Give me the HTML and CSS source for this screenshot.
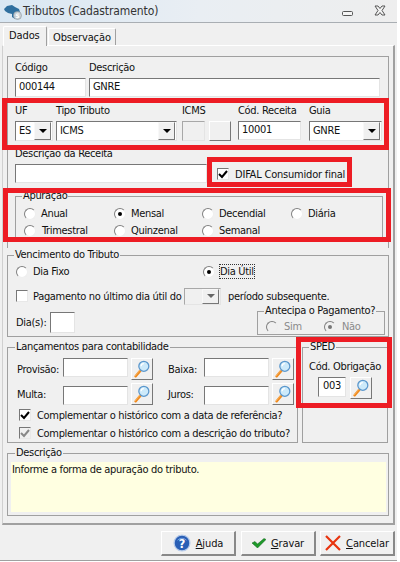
FILE: index.html
```html
<!DOCTYPE html>
<html>

<head>
    <title>Tributos (Cadastramento)</title>
    <link rel="stylesheet" href="styles.css">
</head>

<body>
    <svg class="defs" width="0" height="0">
        <symbol id="lupa" viewBox="0 0 22 22">
            <path d="M4 19 L9 13" stroke="#f08a1d" stroke-width="2.8" stroke-linecap="round" />
            <path d="M3.5 18.5 L8.5 12.5" stroke="#f9c27c" stroke-width="0.8" stroke-linecap="round" />
            <circle cx="13" cy="8" r="5.5" fill="#cdeafa" stroke="#5b97cc" stroke-width="1.4" />
            <path d="M10 8 A3 3 0 0 1 13 5" fill="none" stroke="#fff" stroke-width="1.4" />
        </symbol>
        <symbol id="visto" viewBox="0 0 12 12">
            <path d="M2 6 L5 9 L10 3" fill="none" stroke="currentColor" stroke-width="2" />
        </symbol>
    </svg>

    <div class="window">
        <div class="titlebar">
            <svg class="app-icon" width="20" height="20" viewBox="0 0 20 20">
                <path d="M1 8 L4 5 L9 4 L12 6 L16 8 L17 11 L14 14 L12 18 L9 16 L9 13 L5 12 L2 10 Z" fill="#2f6f9f" />
                <circle cx="14.5" cy="14.5" r="4" fill="#c9d0d6" stroke="#8a949c" stroke-width="0.6" />
                <text x="12.6" y="17" class="app-s">S</text>
            </svg>
            <span class="title">Tributos (Cadastramento)</span>
            <svg class="win-btn" width="46" height="12" viewBox="0 0 46 12">
                <rect x="0.5" y="6.5" width="10" height="4" rx="1" fill="#f4f4f4" stroke="#555" />
                <path d="M33 1 L36 1 L38 3.5 L40 1 L43 1 L40 5.5 L43 10 L40 10 L38 7.5 L36 10 L33 10 L36 5.5 Z" fill="#f4f4f4" stroke="#555" />
            </svg>
        </div>

        <div class="tabs">
            <div class="tab active">Dados</div>
            <div class="tab">Observação</div>
        </div>

        <div class="page">
            <div class="group-main">
                <div class="row row-1">
                    <div class="field">
                        <label>Código</label>
                        <div class="input">000144</div>
                    </div>
                    <div class="field">
                        <label>Descrição</label>
                        <div class="input">GNRE</div>
                    </div>
                </div>

                <div class="row row-2">
                    <div class="field f-uf">
                        <label>UF</label>
                        <div class="combo"><span>ES</span><i class="arrow"></i></div>
                    </div>
                    <div class="field f-tipo">
                        <label>Tipo Tributo</label>
                        <div class="combo"><span>ICMS</span><i class="arrow"></i></div>
                    </div>
                    <div class="field f-icms">
                        <label>ICMS</label>
                        <div class="icms-box">
                            <div class="input disabled"></div>
                            <div class="raised"></div>
                        </div>
                    </div>
                    <div class="field f-receita">
                        <label>Cód. Receita</label>
                        <div class="input">10001</div>
                    </div>
                    <div class="field f-guia">
                        <label>Guia</label>
                        <div class="combo"><span>GNRE</span><i class="arrow"></i></div>
                    </div>
                </div>

                <div class="row row-3">
                    <div class="field">
                        <label>Descrição da Receita</label>
                        <div class="input"></div>
                    </div>
                    <div class="check-line difal">
                        <span class="check on"><svg width="12" height="12"><use href="#visto" /></svg></span>
                        <span>DIFAL Consumidor final</span>
                    </div>
                </div>

                <fieldset class="apuracao">
                    <legend>Apuração</legend>
                    <div class="radio-grid">
                        <div class="radio-line"><span class="radio"></span>Anual</div>
                        <div class="radio-line"><span class="radio on"></span>Mensal</div>
                        <div class="radio-line"><span class="radio"></span>Decendial</div>
                        <div class="radio-line"><span class="radio"></span>Diária</div>
                        <div class="radio-line"><span class="radio"></span>Trimestral</div>
                        <div class="radio-line"><span class="radio"></span>Quinzenal</div>
                        <div class="radio-line"><span class="radio"></span>Semanal</div>
                    </div>
                </fieldset>
            </div>

            <fieldset class="vencimento">
                <legend>Vencimento do Tributo</legend>
                <div class="venc-radios">
                    <div class="radio-line"><span class="radio"></span>Dia Fixo</div>
                    <div class="radio-line"><span class="radio on"></span><span class="focus">Dia Útil</span></div>
                </div>
                <div class="pagamento">
                    <span class="check"></span>
                    <span class="pag-text">Pagamento no último dia útil do</span>
                    <div class="combo disabled"><span></span><i class="arrow"></i></div>
                    <span>período subsequente.</span>
                </div>
                <div class="dias">
                    <div class="dias-field">
                        <span class="dias-label">Dia(s):</span>
                        <div class="input"></div>
                    </div>
                    <fieldset class="antecipa">
                        <legend>Antecipa o Pagamento?</legend>
                        <div class="antecipa-radios">
                            <div class="radio-line"><span class="radio"></span>Sim</div>
                            <div class="radio-line"><span class="radio on"></span>Não</div>
                        </div>
                    </fieldset>
                </div>
            </fieldset>

            <div class="split">
                <fieldset class="lancamentos">
                    <legend>Lançamentos para contabilidade</legend>
                    <div class="lanc-row">
                        <span class="lanc-label">Provisão:</span>
                        <div class="input"></div>
                        <div class="raised lupa"><svg width="20" height="20"><use href="#lupa" /></svg></div>
                        <span class="lanc-label second">Baixa:</span>
                        <div class="input"></div>
                        <div class="raised lupa"><svg width="20" height="20"><use href="#lupa" /></svg></div>
                    </div>
                    <div class="lanc-row lower">
                        <span class="lanc-label">Multa:</span>
                        <div class="input"></div>
                        <div class="raised lupa"><svg width="20" height="20"><use href="#lupa" /></svg></div>
                        <span class="lanc-label second">Juros:</span>
                        <div class="input"></div>
                        <div class="raised lupa"><svg width="20" height="20"><use href="#lupa" /></svg></div>
                    </div>
                    <div class="check-line compl">
                        <span class="check on"><svg width="12" height="12"><use href="#visto" /></svg></span>
                        <span>Complementar o histórico com a data de referência?</span>
                    </div>
                    <div class="check-line compl">
                        <span class="check on muted"><svg width="12" height="12"><use href="#visto" /></svg></span>
                        <span>Complementar o histórico com a descrição do tributo?</span>
                    </div>
                </fieldset>

                <fieldset class="sped">
                    <legend>SPED</legend>
                    <div class="sped-label">Cód. Obrigação</div>
                    <div class="sped-row">
                        <div class="input center">003</div>
                        <div class="raised lupa"><svg width="20" height="20"><use href="#lupa" /></svg></div>
                    </div>
                </fieldset>
            </div>

            <fieldset class="descricao">
                <legend>Descrição</legend>
                <div class="hint">Informe a forma de apuração do tributo.</div>
            </fieldset>
        </div>

        <div class="footer">
            <button>
                <svg width="18" height="18" viewBox="0 0 20 20">
                    <circle cx="10" cy="10" r="8.8" fill="#2a5fb5" stroke="#b7cbea" stroke-width="1.4" />
                    <path d="M5 7 A6 5 0 0 1 15 7" fill="none" stroke="#7fa6e2" />
                    <text x="10" y="15" class="help-q">?</text>
                </svg>
                <span><u>A</u>juda</span>
            </button>
            <button>
                <svg width="14" height="10" viewBox="0 0 14 10">
                    <path d="M0 5 L3 3.5 L5.5 6 L12 0.5 L14 1.5 L5.5 10 Z" fill="#1f9a2a" stroke="#0d5f16" stroke-width="0.5" />
                </svg>
                <span><u>G</u>ravar</span>
            </button>
            <button class="cancelar">
                <svg width="16" height="16" viewBox="0 0 16 16">
                    <path d="M1 1 L15 15 M15 1 L1 15" stroke="#e8340f" stroke-width="2.2" />
                </svg>
                <span><u>C</u>ancelar</span>
            </button>
        </div>

        <!-- red marks drawn over the screen -->
        <div class="mark mark-linha"></div>
        <div class="mark mark-difal"></div>
        <div class="mark mark-apuracao"></div>
        <div class="mark mark-sped"></div>
    </div>
</body>

</html>
```

FILE: styles.css
```css
body {
    margin: 0;
    background-color: #fff;
    font-family: "DejaVu Sans Condensed", "Liberation Sans", Arial, sans-serif;
    font-size: 11px;
    letter-spacing: -0.32px;
    color: #111;
}

.defs {
    position: absolute;
}

.window {
    position: relative;
    display: flex;
    flex-direction: column;
    width: 397px;
    height: 560px;
    background-color: #f0f0f0;
    border-bottom: 1px solid #a0a0a0;
    overflow: hidden;
}

/* Title bar */
.titlebar {
    display: flex;
    align-items: center;
    height: 22px;
    padding: 0 9px 0 3px;
    background: linear-gradient(90deg, #d9e7f3, #e9eef3 50%, #eeeeee);
    border-bottom: 1px solid #a9aeb3;
}

.app-icon {
    margin-right: 0;
}

.app-s {
    font-size: 6px;
    font-weight: bold;
    fill: #fff;
}

.title {
    flex: 1;
    font-size: 12px;
    letter-spacing: -0.1px;
    color: #333;
}

/* Tabs */
.tabs {
    display: flex;
    align-items: flex-end;
    height: 22px;
    padding-left: 3px;
}

.tab {
    height: 17px;
    line-height: 17px;
    padding: 0 4px;
    margin-left: 1px;
    border: 1px solid #a0a0a0;
    border-bottom: none;
    border-top-color: #fff;
    border-left-color: #fff;
    box-sizing: border-box;
    border-radius: 2px 2px 0 0;
    letter-spacing: -0.1px;
}

.tab.active {
    position: relative;
    height: 20px;
    line-height: 18px;
    width: 44px;
    padding: 0 5px;
    margin: 0 0 -1px;
    background-color: #f0f0f0;
}

/* Main panel */
.page {
    width: 393px;
    height: 480px;
    margin-left: 2px;
    padding: 10px 0 0 4px;
    box-sizing: border-box;
    border: 1px solid #a0a0a0;
    border-top-color: #fff;
    border-left-color: #d0d0d0;
    border-right-width: 2px;
    border-bottom-width: 2px;
}

.group-main {
    width: 382px;
    height: 192px;
    padding: 4px 0 0 7px;
    box-sizing: border-box;
    border: 1px solid #a0a0a0;
    border-bottom: none;
}

.row {
    display: grid;
}

.row-1 {
    grid-template-columns: 71px 291px;
    column-gap: 3px;
}

.row-2 {
    display: flex;
    margin-top: 7px;
    white-space: nowrap;
}

.f-uf {
    width: 38px;
    margin-right: 3px;
}

.f-tipo {
    width: 121px;
    margin-right: 5px;
}

.f-icms {
    width: 49px;
    margin-right: 7px;
}

.f-receita {
    width: 63px;
    margin-right: 8px;
}

.f-guia {
    width: 73px;
}

.row-3 {
    grid-template-columns: 192px auto;
    margin-top: 6px;
}

.field label {
    display: block;
    height: 17px;
    line-height: 13px;
}

/* Sunken controls */
.input {
    height: 19px;
    line-height: 16px;
    padding-left: 3px;
    box-sizing: border-box;
    background-color: #fff;
    border: 1px solid #fff;
    border-top-color: #777;
    border-left-color: #777;
    border-right-color: #e4e4e4;
    border-bottom-color: #e4e4e4;
}

.input.center {
    padding: 0;
    text-align: center;
}

.input.disabled {
    width: 23px;
    height: 20px;
    background-color: #f0f0f0;
    border-top-color: #a8a8a8;
    border-left-color: #a8a8a8;
}

.combo {
    display: flex;
    justify-content: space-between;
    align-items: center;
    height: 20px;
    padding: 1px 1px 1px 3px;
    box-sizing: border-box;
    background-color: #fff;
    border: 1px solid #e4e4e4;
    border-top-color: #777;
    border-left-color: #777;
}

.combo span {
    padding-bottom: 2px;
}

.arrow {
    display: flex;
    align-items: center;
    justify-content: center;
    width: 15px;
    height: 16px;
    background-color: #f0f0f0;
    border: 1px solid #f8f8f8;
    border-right-color: #777;
    border-bottom-color: #777;
}

.arrow::after {
    content: "";
    border: 4px solid transparent;
    border-top-color: #000;
    border-bottom: none;
}

.raised {
    box-sizing: border-box;
    background-color: #f0f0f0;
    border: 1px solid #fff;
    border-right-color: #777;
    border-bottom-color: #777;
}

.icms-box {
    display: flex;
    gap: 4px;
}

.icms-box .raised {
    width: 22px;
    height: 20px;
}

/* Check and radio */
.check {
    display: inline-flex;
    flex: none;
    width: 12px;
    height: 12px;
    box-sizing: border-box;
    background-color: #fff;
    border: 1px solid #e8e8e8;
    border-top-color: #777;
    border-left-color: #777;
    color: #000;
}

.check svg {
    margin: -1px;
}

.check.muted {
    background-color: #f0f0f0;
    color: #888;
}

.check-line {
    display: flex;
    align-items: center;
    gap: 6px;
    white-space: nowrap;
}

.difal {
    height: 20px;
    margin: 17px 0 0 10px;
    letter-spacing: -0.2px;
}

.radio-line {
    display: flex;
    align-items: center;
    gap: 5px;
    height: 17px;
}

.radio {
    display: flex;
    flex: none;
    align-items: center;
    justify-content: center;
    width: 12px;
    height: 12px;
    box-sizing: border-box;
    background-color: #fff;
    border: 1px solid #eee;
    border-top-color: #808080;
    border-left-color: #808080;
    border-radius: 50%;
}

.radio.on::after {
    content: "";
    width: 4px;
    height: 4px;
    background-color: #000;
    border-radius: 50%;
}

/* Group boxes */
fieldset {
    margin: 0;
    padding: 0;
    box-sizing: border-box;
    border: 1px solid #a0a0a0;
    min-width: 0;
}

legend {
    height: 14px;
    line-height: 14px;
    margin-left: 6px;
    padding: 0 1px;
    white-space: nowrap;
}

.apuracao {
    width: 368px;
    height: 50px;
    margin-top: 5px;
}

.radio-grid {
    display: grid;
    grid-template-columns: 90px 88px 89px auto;
    padding: 2px 0 0 8px;
}

.radio-grid .radio-line:nth-child(5) {
    gap: 6px;
}

.vencimento {
    width: 382px;
    height: 89px;
}

.venc-radios {
    display: grid;
    grid-template-columns: 187px auto;
    padding: 1px 0 0 8px;
}

.focus {
    outline: 1px dotted #333;
}

.pagamento {
    display: flex;
    align-items: center;
    height: 16px;
    margin-top: 8px;
    padding-left: 8px;
    white-space: nowrap;
}

.pag-text {
    width: 151px;
    margin-left: 5px;
}

.pagamento .combo {
    width: 37px;
    height: 17px;
    margin-right: 7px;
    background-color: #f0f0f0;
    border-top-color: #a8a8a8;
    border-left-color: #a8a8a8;
}

.pagamento .arrow {
    height: 13px;
}

.pagamento .arrow::after {
    border-top-color: #666;
}

.dias {
    display: flex;
    justify-content: space-between;
    padding: 0 3px 0 8px;
}

.dias-field {
    display: flex;
    align-items: center;
    height: 21px;
    margin-top: 8px;
}

.dias-label {
    width: 34px;
}

.dias-field .input {
    width: 25px;
    height: 21px;
}

.antecipa {
    width: 128px;
    height: 31px;
}

.antecipa-radios {
    display: flex;
    color: #8a8a8a;
    padding-left: 8px;
}

.antecipa-radios .radio-line {
    gap: 6px;
    width: 58px;
}

.antecipa-radios .radio {
    background-color: #f0f0f0;
}

.antecipa-radios .radio.on::after {
    background-color: #777;
}

.split {
    display: flex;
    gap: 4px;
    margin-top: 3px;
}

.lancamentos {
    width: 291px;
    height: 103px;
    padding: 4px 0 0 9px;
}

.lancamentos legend {
    margin-left: -2px;
}

.lanc-row {
    display: flex;
    height: 22px;
}

.lanc-row.lower {
    align-items: flex-end;
    margin-top: 3px;
    margin-bottom: 1px;
}

.lanc-label {
    align-self: center;
    width: 46px;
}

.lanc-label.second {
    width: 36px;
    margin-left: 15px;
}

.lanc-row .input {
    width: 65px;
}

.lupa {
    display: flex;
    align-items: center;
    justify-content: center;
    width: 22px;
    height: 22px;
    margin-left: 3px;
}

.compl {
    height: 18px;
    margin-left: 2px;
}

.sped {
    width: 86px;
    height: 103px;
    padding-top: 5px;
}

.sped-label {
    text-align: center;
    line-height: 15px;
    white-space: nowrap;
}

.sped-row {
    display: flex;
    margin: 3px 0 0 15px;
}

.sped-row .input {
    width: 28px;
    height: 20px;
}

.sped-row .lupa {
    margin-left: 4px;
}

.descricao {
    width: 382px;
    height: 70px;
    margin-top: 3px;
    padding: 2px 1px 0 3px;
}

.descricao legend {
    margin-left: 4px;
}

.hint {
    height: 50px;
    width: 375px;
    line-height: 15px;
    padding-left: 1px;
    box-sizing: border-box;
    background-color: #ffffe1;
}

/* Footer buttons */
.footer {
    display: flex;
    justify-content: flex-end;
    gap: 5px;
    padding: 6px 2px 0 0;
}

button {
    display: flex;
    align-items: center;
    justify-content: center;
    gap: 5px;
    width: 75px;
    height: 25px;
    padding: 0;
    font: inherit;
    letter-spacing: -0.1px;
    color: #111;
    background-color: #f0f0f0;
    border: 1px solid #fff;
    border-right: 2px solid #888;
    border-bottom: 2px solid #888;
}

.cancelar {
    margin-left: -1px;
}

.help-q {
    font-size: 14px;
    font-weight: bold;
    fill: #fff;
    text-anchor: middle;
}

/* Red annotations */
.mark {
    position: absolute;
    box-sizing: border-box;
    border: 5px solid #ed1c24;
}

.mark-linha {
    left: 2px;
    top: 98px;
    width: 387px;
    height: 52px;
}

.mark-difal {
    left: 207px;
    top: 157px;
    width: 145px;
    height: 30px;
}

.mark-apuracao {
    left: 3px;
    top: 188px;
    width: 388px;
    height: 54px;
}

.mark-sped {
    left: 296px;
    top: 337px;
    width: 96px;
    height: 71px;
}
```
